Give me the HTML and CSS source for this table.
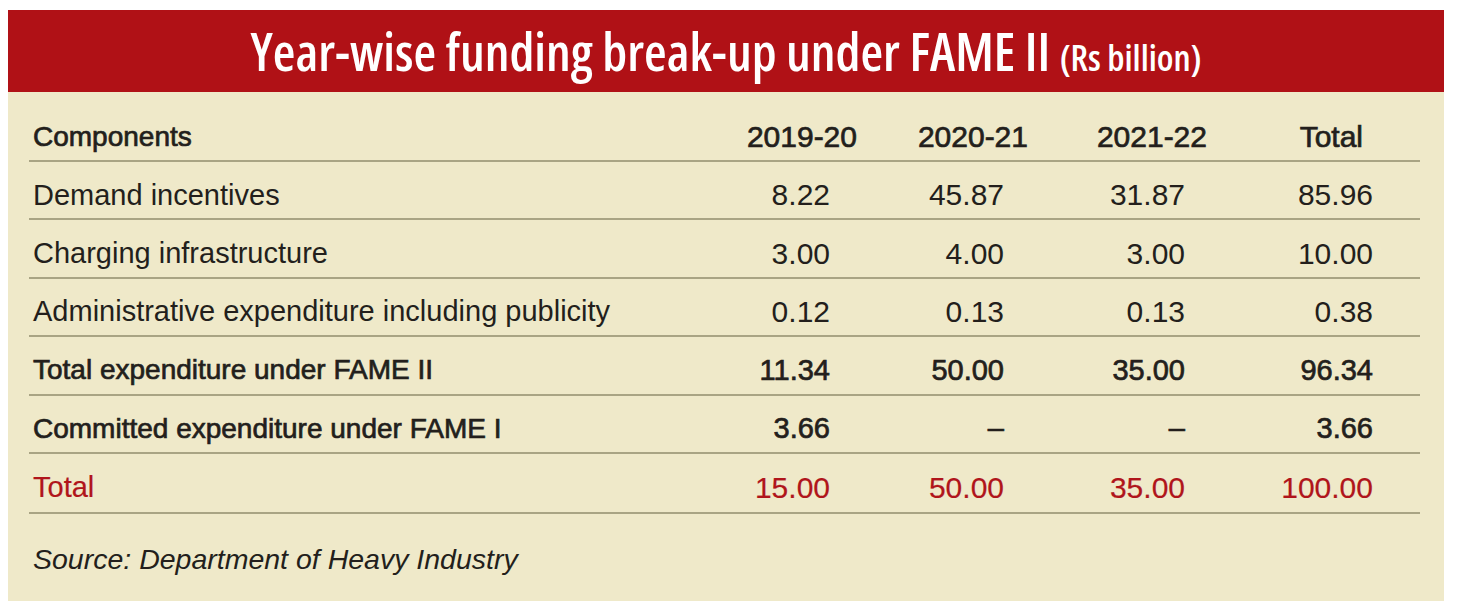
FILE: index.html
```html
<!DOCTYPE html>
<html lang="en">
<head>
<meta charset="utf-8">
<title>Year-wise funding break-up under FAME II</title>
<link rel="stylesheet" href="styles.css">
</head>
<body>
<div class="panel">
  <div class="title-bar">
    <h1 class="title">Year-wise funding break-up under FAME II <span class="unit">(Rs billion)</span></h1>
  </div>
  <div class="table">
    <div class="row head">
      <div class="label">Components</div>
      <div class="num">2019-20</div>
      <div class="num">2020-21</div>
      <div class="num">2021-22</div>
      <div class="num">Total</div>
    </div>
    <div class="row">
      <div class="label">Demand incentives</div>
      <div class="num">8.22</div>
      <div class="num">45.87</div>
      <div class="num">31.87</div>
      <div class="num">85.96</div>
    </div>
    <div class="row">
      <div class="label">Charging infrastructure</div>
      <div class="num">3.00</div>
      <div class="num">4.00</div>
      <div class="num">3.00</div>
      <div class="num">10.00</div>
    </div>
    <div class="row">
      <div class="label">Administrative expenditure including publicity</div>
      <div class="num">0.12</div>
      <div class="num">0.13</div>
      <div class="num">0.13</div>
      <div class="num">0.38</div>
    </div>
    <div class="row strong">
      <div class="label">Total expenditure under FAME II</div>
      <div class="num">11.34</div>
      <div class="num">50.00</div>
      <div class="num">35.00</div>
      <div class="num">96.34</div>
    </div>
    <div class="row strong">
      <div class="label">Committed expenditure under FAME I</div>
      <div class="num">3.66</div>
      <div class="num">–</div>
      <div class="num">–</div>
      <div class="num">3.66</div>
    </div>
    <div class="row total">
      <div class="label">Total</div>
      <div class="num">15.00</div>
      <div class="num">50.00</div>
      <div class="num">35.00</div>
      <div class="num">100.00</div>
    </div>
  </div>
  <p class="source">Source: Department of Heavy Industry</p>
</div>
</body>
</html>
```
FILE: styles.css
```css
html, body {
  margin: 0;
  padding: 0;
  background: #ffffff;
}

body {
  font-family: "Liberation Sans", Arial, sans-serif;
  color: #231f1c;
}

.panel {
  margin: 10px 15px 12px 8px;
  width: 1436px;
  height: 591px;
  background: #efe9c9;
  box-sizing: border-box;
  overflow: hidden;
}

.title-bar {
  height: 82px;
  background: #b01116;
  display: flex;
  align-items: center;
  justify-content: center;
}

.title {
  margin: 0;
  font-family: "Open Sans", sans-serif;
  font-stretch: 75%;
  font-weight: 600;
  font-size: 52px;
  color: #ffffff;
  line-height: 1;
  white-space: nowrap;
}

.unit {
  font-size: 36px;
}

.table {
  margin: 0 24px 0 21px;
  padding-top: 22px;
}

.row {
  display: grid;
  grid-template-columns: 706px 125px 173px 177px 210px;
  align-items: center;
  height: 58.4px;
  padding-top: 10px;
  box-sizing: border-box;
  border-bottom: 2px solid #a9a484;
}

.row.head {
  height: 48px;
  padding-top: 0;
}

.row.total {
  height: 60px;
  color: #b0151b;
}

.label {
  padding-left: 4px;
  font-size: 29px;
  white-space: nowrap;
}

.num {
  text-align: right;
  font-size: 30px;
  white-space: nowrap;
}

.row .num:nth-child(2) { padding-right: 30px; }
.row .num:nth-child(3) { padding-right: 29px; }
.row .num:nth-child(4) { padding-right: 25px; }
.row .num:nth-child(5) { padding-right: 47px; }

.row.head .num:nth-child(2) { padding-right: 3px; }
.row.head .num:nth-child(3) { padding-right: 5px; }
.row.head .num:nth-child(4) { padding-right: 3px; }
.row.head .num:nth-child(5) { padding-right: 57px; }

.row.head .label {
  font-size: 28px;
  -webkit-text-stroke: 0.7px #231f1c;
}

.row.head .num {
  -webkit-text-stroke: 0.7px #231f1c;
}

.row.strong .label {
  font-size: 28px;
  -webkit-text-stroke: 0.7px #231f1c;
}

.row.strong .num {
  font-size: 29px;
  -webkit-text-stroke: 0.7px #231f1c;
}

.row.total .label,
.row.total .num {
  -webkit-text-stroke: 0.2px #b0151b;
}

.source {
  margin: 29px 0 0 25px;
  font-size: 28.5px;
  font-style: italic;
  line-height: 32px;
}
```
